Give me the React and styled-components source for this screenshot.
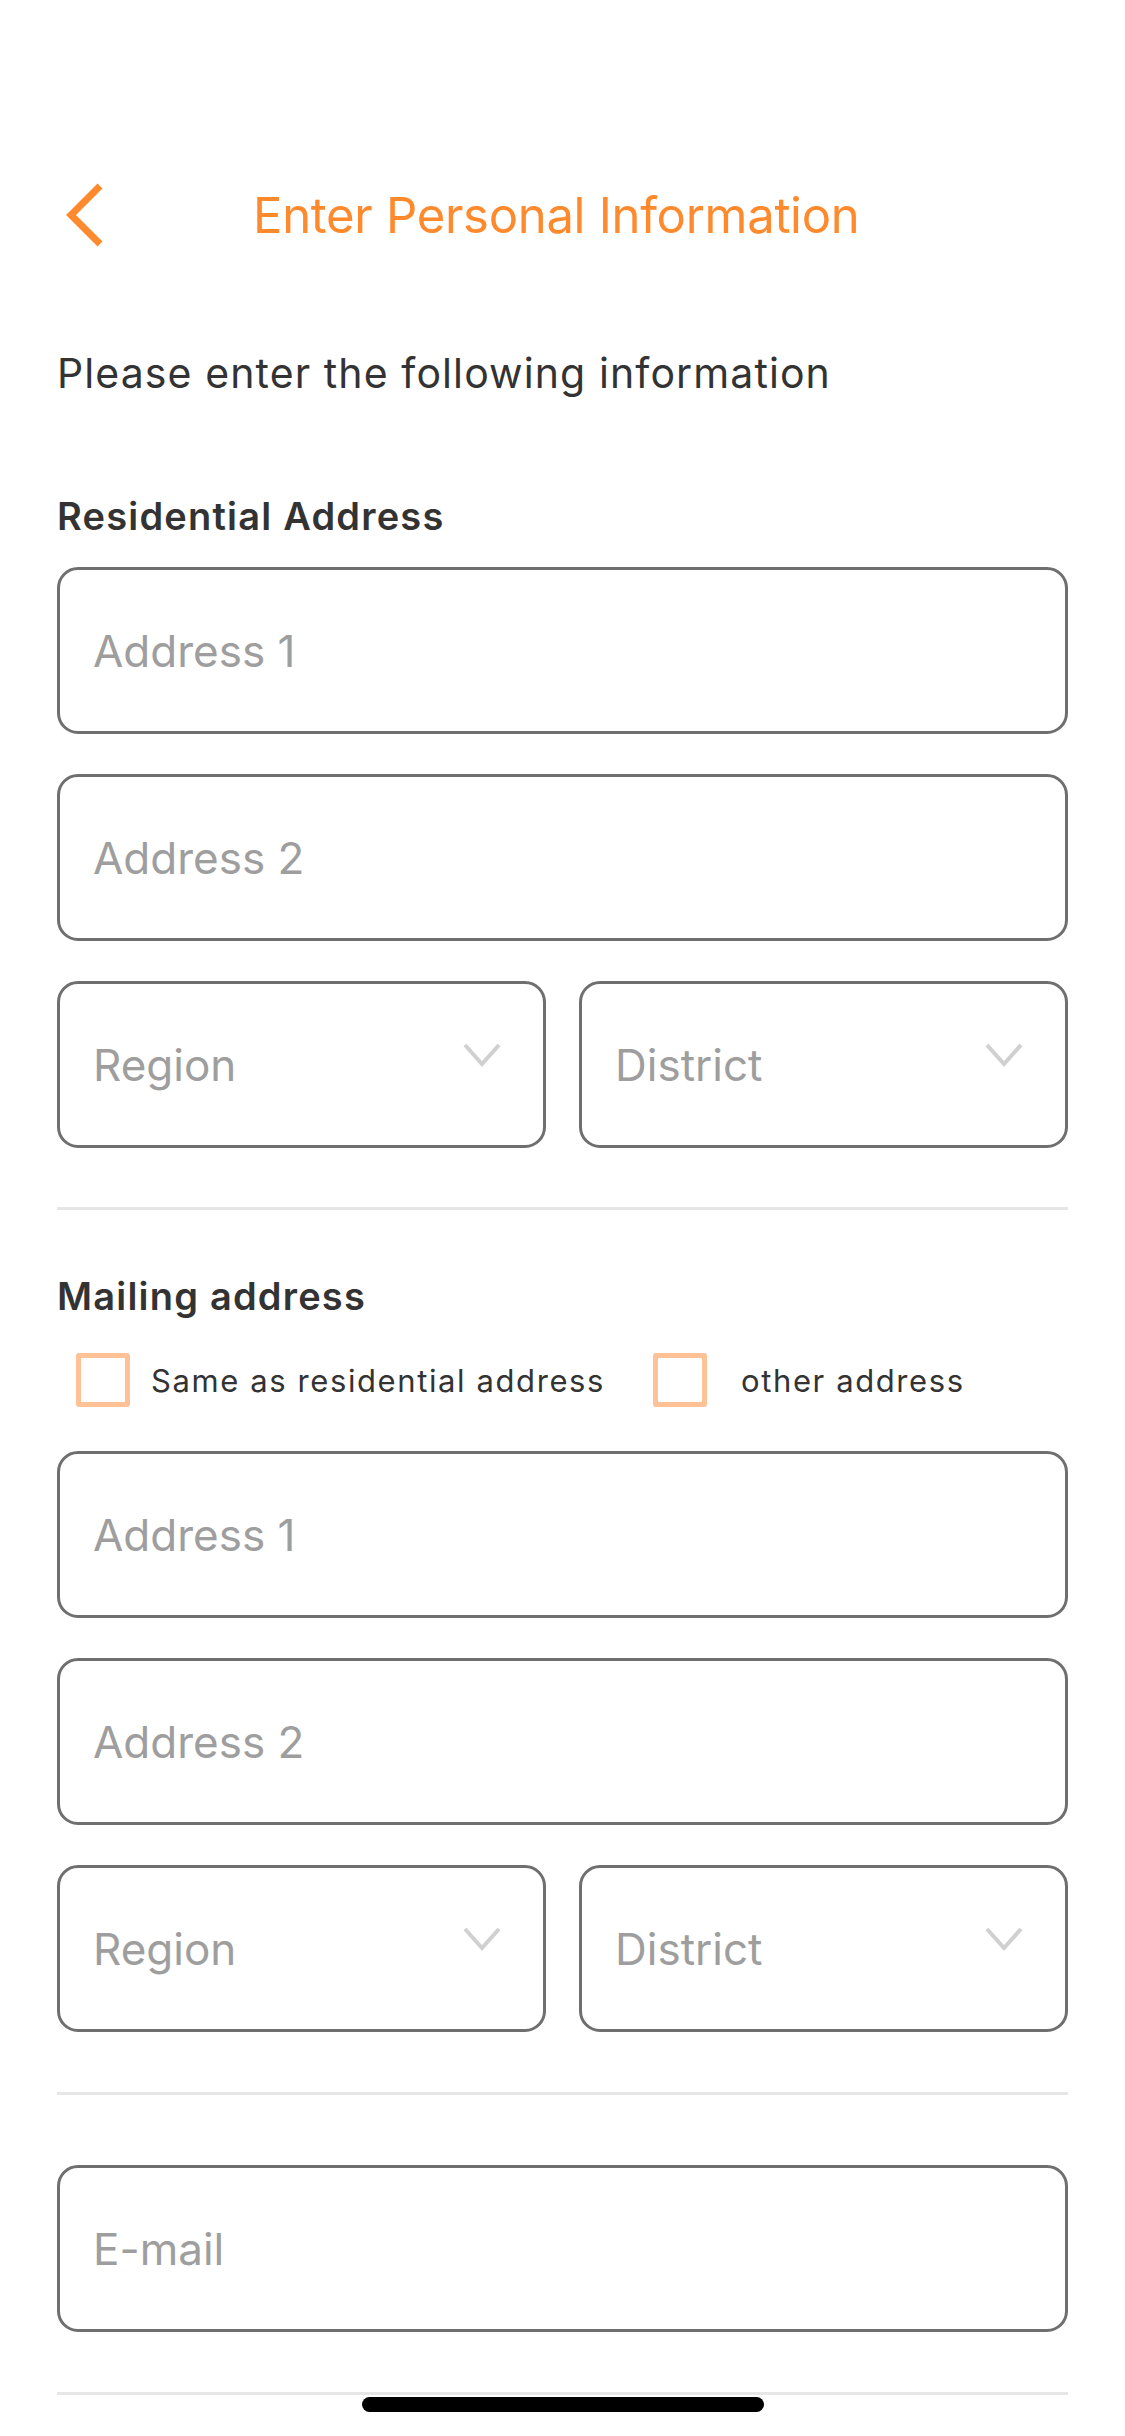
import React from "react";
import styled, { createGlobalStyle } from "styled-components";

const GlobalStyle = createGlobalStyle`
  * { box-sizing: border-box; }
  html, body { margin: 0; padding: 0; background: #ffffff; }
  body { font-family: Inter, "Noto Sans", "Liberation Sans", sans-serif; -webkit-font-smoothing: antialiased; }
`;

const Screen = styled.div`
  position: relative;
  width: 1125px;
  min-height: 2436px;
  background: #ffffff;
  overflow: hidden;
`;

const Header = styled.header`
  display: flex;
  align-items: center;
  height: 130px;
  margin-top: 150px;
  padding-left: 63px;
`;

const BackButton = styled.button`
  display: flex;
  align-items: center;
  justify-content: center;
  padding: 0;
  border: 0;
  background: transparent;
  width: 42px;
  height: 64px;
  cursor: pointer;
`;

const Title = styled.h1`
  margin: 0 0 0 148px;
  font-size: 49px;
  line-height: 49px;
  font-weight: 400;
  color: #ff8a2e;
  letter-spacing: -0.3px;
`;

const Content = styled.main`
  display: flex;
  flex-direction: column;
  padding: 0 57px;
`;

const Intro = styled.p`
  margin: 73px 0 0;
  font-size: 41px;
  line-height: 41px;
  color: #333333;
  letter-spacing: 1.1px;
`;

const SectionLabel = styled.h2`
  margin: ${(p) => p.$top}px 0 0;
  font-size: 38px;
  line-height: 38px;
  font-weight: 600;
  color: #333333;
  letter-spacing: 1.2px;
`;

const FieldStack = styled.div`
  display: flex;
  flex-direction: column;
  gap: 40px;
  margin-top: ${(p) => p.$top}px;
`;

const Field = styled.div`
  display: flex;
  align-items: center;
  justify-content: space-between;
  height: 167px;
  padding: 0 42px 0 33px;
  border: 3px solid #6f6f6f;
  border-radius: 21px;
  background: #ffffff;
  min-width: 0;
`;

const Placeholder = styled.span`
  font-size: 44px;
  line-height: 44px;
  color: #9e9e9e;
`;

const SelectRow = styled.div`
  display: grid;
  grid-template-columns: 1fr 1fr;
  gap: 33px;
`;

const Chevron = styled.svg`
  align-self: flex-start;
  margin-top: 59px;
  flex: none;
`;

const Divider = styled.hr`
  margin: ${(p) => p.$top}px 0 0;
  height: 3px;
  border: 0;
  background: #e6e6e6;
`;

const CheckRow = styled.div`
  display: flex;
  align-items: center;
  gap: 48px;
  margin-top: 38px;
  padding-left: 19px;
`;

const Option = styled.label`
  display: flex;
  align-items: center;
  gap: ${(p) => p.$gap}px;
`;

const Box = styled.span`
  width: 54px;
  height: 54px;
  border: 5px solid #ffc196;
  border-radius: 3px;
  background: #ffffff;
  flex: none;
`;

const OptionText = styled.span`
  font-size: 31px;
  line-height: 31px;
  color: #333333;
  letter-spacing: 1.6px;
`;

const HomeIndicator = styled.div`
  position: absolute;
  left: 50%;
  bottom: 24px;
  width: 402px;
  height: 15px;
  margin-left: -201px;
  border-radius: 8px;
  background: #000000;
`;

const BackIcon = () => (
  <svg width="42" height="64" viewBox="0 0 42 64" fill="none">
    <path d="M37 3 L8 32 L37 61" stroke="#ff8a2e" strokeWidth="7" strokeLinejoin="miter" />
  </svg>
);

const DownIcon = () => (
  <Chevron width="38" height="24" viewBox="0 0 38 24" fill="none">
    <path d="M2 2 L19 21 L36 2" stroke="#d0d0d0" strokeWidth="4" />
  </Chevron>
);

const TextField = ({ label }) => (
  <Field>
    <Placeholder>{label}</Placeholder>
  </Field>
);

const SelectField = ({ label }) => (
  <Field>
    <Placeholder>{label}</Placeholder>
    <DownIcon />
  </Field>
);

const AddressFields = ({ top }) => (
  <FieldStack $top={top}>
    <TextField label="Address 1" />
    <TextField label="Address 2" />
    <SelectRow>
      <SelectField label="Region" />
      <SelectField label="District" />
    </SelectRow>
  </FieldStack>
);

export default function App() {
  return (
    <>
      <GlobalStyle />
      <Screen>
        <Header>
          <BackButton aria-label="Back">
            <BackIcon />
          </BackButton>
          <Title>Enter Personal Information</Title>
        </Header>
        <Content>
          <Intro>Please enter the following information</Intro>
          <SectionLabel $top={103}>Residential Address</SectionLabel>
          <AddressFields top={32} />
          <Divider $top={59} />
          <SectionLabel $top={67}>Mailing address</SectionLabel>
          <CheckRow>
            <Option $gap={21}>
              <Box />
              <OptionText>Same as residential address</OptionText>
            </Option>
            <Option $gap={34}>
              <Box />
              <OptionText>other address</OptionText>
            </Option>
          </CheckRow>
          <AddressFields top={44} />
          <Divider $top={60} />
          <FieldStack $top={70}>
            <TextField label="E-mail" />
          </FieldStack>
          <Divider $top={60} />
        </Content>
        <HomeIndicator />
      </Screen>
    </>
  );
}
